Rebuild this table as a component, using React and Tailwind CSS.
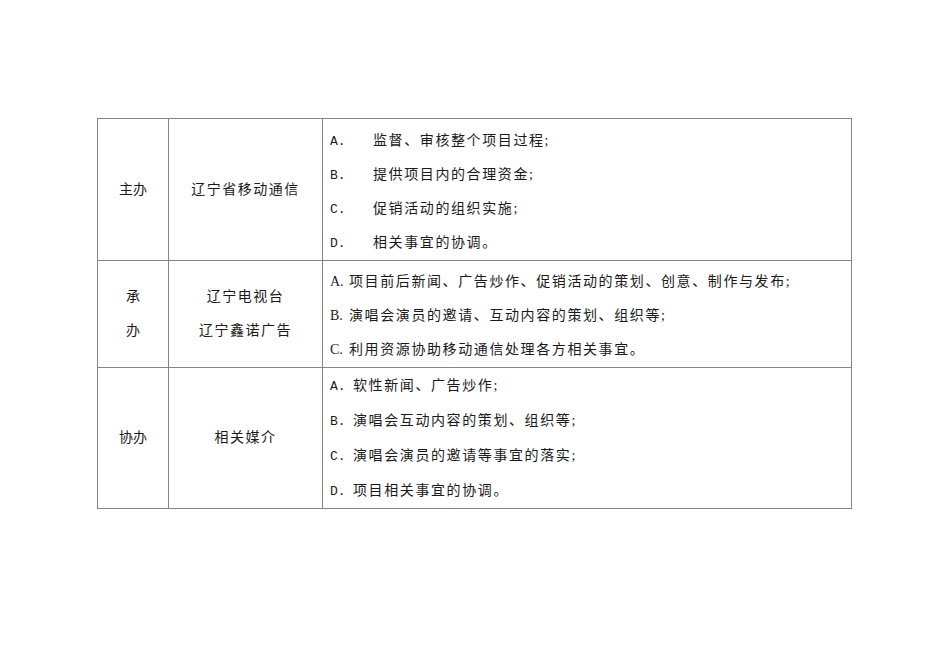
const cjk = "font-['Liberation_Serif','Noto_Sans_CJK_SC',serif]";

const rows = [
  {
    role: ["主办"],
    org: ["辽宁省移动通信"],
    labelFont: "font-['Liberation_Mono','Noto_Sans_CJK_SC',monospace] text-[13px]",
    labelW: "w-[43px]",
    pad: "pt-[5px]",
    lh: "leading-[34px]",
    h: "h-[140px]",
    items: [
      ["A.", "监督、审核整个项目过程;"],
      ["B.", "提供项目内的合理资金;"],
      ["C.", "促销活动的组织实施;"],
      ["D.", "相关事宜的协调。"],
    ],
  },
  {
    role: ["承", "办"],
    org: ["辽宁电视台", "辽宁鑫诺广告"],
    labelFont: "font-['Liberation_Serif','Noto_Sans_CJK_SC',serif] text-[14px]",
    labelW: "w-[19px]",
    pad: "pt-[4px]",
    lh: "leading-[34px]",
    h: "h-[107px]",
    items: [
      ["A.", "项目前后新闻、广告炒作、促销活动的策划、创意、制作与发布;"],
      ["B.", "演唱会演员的邀请、互动内容的策划、组织等;"],
      ["C.", "利用资源协助移动通信处理各方相关事宜。"],
    ],
  },
  {
    role: ["协办"],
    org: ["相关媒介"],
    labelFont: "font-['Liberation_Mono','Noto_Sans_CJK_SC',monospace] text-[13px]",
    labelW: "w-[23px]",
    pad: "pt-0",
    lh: "leading-[35px]",
    h: "h-[140px]",
    items: [
      ["A.", "软性新闻、广告炒作;"],
      ["B.", "演唱会互动内容的策划、组织等;"],
      ["C.", "演唱会演员的邀请等事宜的落实;"],
      ["D.", "项目相关事宜的协调。"],
    ],
  },
];

export default function App() {
  return (
    <div className="w-[950px] h-[672px] bg-white pt-[118px] pl-[97px] text-[#1a1a1a]">
      <table className={`border-collapse ${cjk} text-[14px]`}>
        <tbody>
          {rows.map((r, i) => (
            <tr key={i} className={r.h}>
              <td className="w-[71px] border border-[#858585] text-center align-middle leading-[34px] p-0">
                {r.role.map((t) => (
                  <div key={t}>{t}</div>
                ))}
              </td>
              <td className="w-[154px] border border-[#858585] text-center align-middle leading-[34px] tracking-[1.5px] p-0">
                {r.org.map((t) => (
                  <div key={t}>{t}</div>
                ))}
              </td>
              <td className={`w-[529px] border border-[#858585] align-top pl-[7px] pb-0 ${r.pad}`}>
                {r.items.map(([l, t]) => (
                  <div key={l} className={`flex items-baseline ${r.lh}`}>
                    <span className={`${r.labelW} shrink-0 leading-none ${r.labelFont}`}>{l}</span>
                    <span className="tracking-[1.6px]">{t}</span>
                  </div>
                ))}
              </td>
            </tr>
          ))}
        </tbody>
      </table>
    </div>
  );
}
